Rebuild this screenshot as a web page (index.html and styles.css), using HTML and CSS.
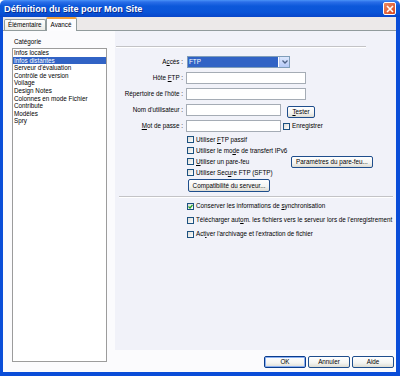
FILE: index.html
```html
<!DOCTYPE html>
<html lang="fr">
<head>
  <meta charset="UTF-8">
  <title>Définition du site pour Mon Site</title>
  <link rel="stylesheet" href="styles.css">
</head>
<body>
<div class="window">
  <div class="titlebar">
    <span class="title">Définition du site pour Mon Site</span>
    <span class="close"><svg width="8" height="8" viewBox="0 0 8 8"><path d="M1 1L7 7M7 1L1 7" stroke="#fff" stroke-width="1.6"/></svg></span>
  </div>
  <div class="frame">
    <div class="tabs">
      <span class="tab">Élémentaire</span>
      <span class="tab active">Avancé</span>
    </div>
    <div class="pane">
      <div class="sidebar">
        <div class="cat-label">Catégorie</div>
        <ul class="catlist">
          <li>Infos locales</li>
          <li class="sel">Infos distantes</li>
          <li>Serveur d'évaluation</li>
          <li>Contrôle de version</li>
          <li>Voilage</li>
          <li>Design Notes</li>
          <li>Colonnes en mode Fichier</li>
          <li>Contribute</li>
          <li>Modèles</li>
          <li>Spry</li>
        </ul>
      </div>
      <div class="right">
        <div class="panel">
          <div class="sep sep-top"></div>
          <div class="form">
            <label>A<u>c</u>cès :</label>
            <div class="field"><span class="combo"><span class="combo-val">FTP</span><span class="combo-btn"><svg width="6" height="4" viewBox="0 0 6 4"><path d="M0.5 0.5L3 3L5.5 0.5" fill="none" stroke="#4d6185" stroke-width="1.3"/></svg></span></span></div>
            <label>Hôte <u>F</u>TP :</label>
            <div class="field"><span class="input wide"></span></div>
            <label>Répertoire de l'hôte :</label>
            <div class="field"><span class="input wide"></span></div>
            <label>Nom d'utilisateur :</label>
            <div class="field"><span class="input"></span><span class="btn btn-test"><span><u>T</u>ester</span></span></div>
            <label><u>M</u>ot de passe :</label>
            <div class="field"><span class="input"></span><span class="check inline"><span class="box"></span><span>Enregistrer</span></span></div>
          </div>
          <div class="opts">
            <div class="check"><span class="box"></span><span>Utiliser <u>F</u>TP passif</span></div>
            <div class="check"><span class="box"></span><span>Utiliser le mo<u>d</u>e de transfert IPv6</span></div>
            <div class="fw-row"><span class="check"><span class="box"></span><span><u>U</u>tiliser un pare-feu</span></span><span class="btn btn-fw"><span>Paramètres du pare-feu...</span></span></div>
            <div class="check"><span class="box"></span><span>Utiliser Sec<u>u</u>re FTP (SFTP)</span></div>
            <span class="btn btn-compat"><span>Compatibilité du serveur...</span></span>
          </div>
          <div class="sep sep-mid"></div>
          <div class="opts2">
            <div class="check"><span class="box"><svg width="5" height="5" viewBox="0 0 5 5"><path d="M0.5 2.5L2 4L4.5 1" fill="none" stroke="#21a121" stroke-width="1.2"/></svg></span><span>Conserver les informations de <u>s</u>ynchronisation</span></div>
            <div class="check"><span class="box"></span><span>Télécharger aut<u>o</u>m. les fichiers vers le serveur lors de l'enregistrement</span></div>
            <div class="check"><span class="box"></span><span>Act<u>i</u>ver l'archivage et l'extraction de fichier</span></div>
          </div>
        </div>
        <div class="footer">
          <span class="btn btn-foot default">OK</span>
          <span class="btn btn-foot">Annuler</span>
          <span class="btn btn-foot">Aide</span>
        </div>
      </div>
    </div>
  </div>
</div>
</body>
</html>
```

FILE: styles.css
```css
body,div,ul,li{margin:0;padding:0;}
ul{list-style-type:none;}
body{background:#fff;font:6.3px/8px "Liberation Sans",Arial,sans-serif;color:#000;}
u{text-decoration:underline;}

.window{width:400px;height:376px;display:flex;flex-direction:column;}
.titlebar{height:17px;flex:none;display:flex;align-items:center;justify-content:space-between;padding:0 4px 0 4px;background:linear-gradient(#4a93f7 0,#2a6ee8 2px,#0c58da 6px,#0a55d8 12px,#0846ca 17px);border-radius:5px 5px 0 0;}
.title{color:#fff;font-weight:700;font-size:9.2px;text-shadow:1px 1px 0 #0b2a8c;}
.close{width:11px;height:11px;border:1px solid #fff;border-radius:2px;background:linear-gradient(135deg,#ec8a64,#d9461c);display:flex;align-items:center;justify-content:center;}

.frame{flex:1;display:flex;flex-direction:column;min-height:0;border-left:3px solid #0a4dd8;border-right:4px solid #0a4dd8;border-bottom:4px solid #0a4dd8;background:#ece9e9;}
.tabs{height:13px;flex:none;display:flex;align-items:flex-end;padding-left:1px;position:relative;z-index:1;}
.tab{height:10px;line-height:10px;padding:0 3px;border:1px solid #919b9c;border-bottom:none;border-radius:2px 2px 0 0;background:linear-gradient(#fff,#ecebe6);}
.tab.active{height:12px;line-height:12px;background:#fcfcfe;border-top:2px solid #f2a23c;margin-bottom:-1px;padding:0 4px;}

.pane{flex:1;min-height:0;display:flex;background:#fbfbfd;border-top:1px solid #919b9c;}
.sidebar{width:103px;padding:6px 0 0 9px;flex:none;}
.cat-label{height:9px;line-height:9px;padding-left:2px;}
.catlist{margin-top:2px;width:93px;height:312px;border:1px solid #9c9c9c;background:#fff;}
.catlist li{height:7.6px;line-height:7.6px;padding-left:1px;white-space:nowrap;}
.catlist li.sel{background:#3163c5;color:#fff;}

.right{flex:1;display:flex;flex-direction:column;}
.panel{height:319px;box-sizing:border-box;flex:none;background:#f1f2f9;padding-top:15px;}
.sep{height:1px;background:#c3c3c6;border-bottom:1px solid #fff;}
.sep-top{width:250px;margin-left:1px;}
.sep-mid{margin:4px 3px 0 4px;}

.form{display:grid;grid-template-columns:68px 1fr;column-gap:3px;grid-auto-rows:16px;margin-top:6px;}
.form label{text-align:right;line-height:16px;white-space:nowrap;}
.field{display:flex;align-items:center;}
.input{width:93px;height:10px;border:1px solid #a5acb5;background:#fff;}
.input.wide{width:118px;}
.combo{margin-left:1px;width:101px;height:10px;border:1px solid #7f9db9;background:#fff;display:flex;}
.combo-val{flex:1;background:#3163c5;color:#fff;line-height:10px;padding-left:1px;margin-right:1px;}
.combo-btn{width:9px;height:10px;background:linear-gradient(#dde8fe,#b4c8f6);border-left:1px solid #b9c9ef;display:flex;align-items:center;justify-content:center;}

.btn{display:inline-flex;align-items:center;justify-content:center;height:10px;border:1px solid #1f4e8c;border-radius:2px;background:linear-gradient(#fff 0,#f4f4f1 60%,#dedcd2 100%);white-space:nowrap;}
.btn-test{width:26px;margin-left:6px;margin-top:3px;}
.btn-fw{width:80px;margin-left:4px;}
.btn-compat{width:80px;height:11px;margin:1px 0 0 1px;}
.btn-foot{width:40px;height:10px;}
.btn-foot.default{border-color:#0a3c8c;box-shadow:inset 0 0 0 1px #8cb0f0;}

.check{display:flex;align-items:center;white-space:nowrap;}
.box{width:5px;height:5px;border:1px solid #1c5180;background:linear-gradient(135deg,#dcdcd6,#fff);margin-right:2px;flex:none;display:flex;align-items:center;justify-content:center;}
.check.inline{margin-left:2px;}

.opts{margin-left:72px;display:flex;flex-direction:column;align-items:flex-start;}
.opts .check,.fw-row{height:11px;}
.fw-row{display:flex;align-items:center;}
.fw-row .check{width:100px;}

.opts2{margin:1px 0 0 72px;}
.opts2 .check{height:14px;}

.footer{flex:1;display:flex;justify-content:flex-end;align-items:flex-start;gap:2px;padding:6px 2px 0 0;}
```
